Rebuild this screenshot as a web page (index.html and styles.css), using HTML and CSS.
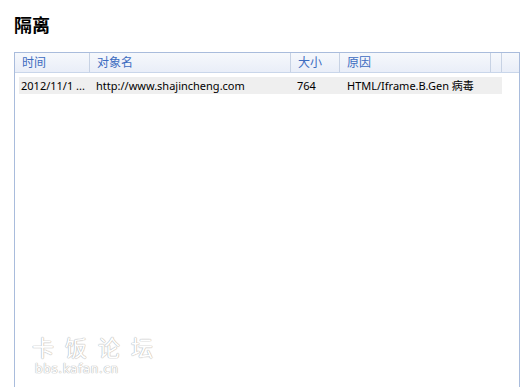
FILE: index.html
```html
<!DOCTYPE html>
<html lang="zh-CN">
<head>
  <meta charset="UTF-8" />
  <title>隔离</title>
  <link rel="stylesheet" href="styles.css">
</head>
<body>
  <h1 class="page-title">隔离</h1>

  <!-- quarantine list -->
  <div class="list-panel">
    <div class="list-head">
      <div class="col col-time">时间</div>
      <div class="col col-name">对象名</div>
      <div class="col col-size">大小</div>
      <div class="col col-reason">原因</div>
      <div class="col col-pad"></div>
      <div class="col col-end"></div>
    </div>
    <div class="list-body">
      <div class="list-row">
        <div class="cell col-time">2012/11/1 ...</div>
        <div class="cell col-name">http://www.shajincheng.com</div>
        <div class="cell col-size">764</div>
        <div class="cell col-reason">HTML/Iframe.B.Gen 病毒</div>
      </div>
    </div>

    <div class="watermark">
      <div class="wm-cn">卡饭论坛</div>
      <div class="wm-en">bbs.kafan.cn</div>
    </div>
  </div>
</body>
</html>
```

FILE: styles.css
```css
/* Global */
body {
  margin: 0;
  background: #fff;
  font-family: "Noto Sans", "Noto Sans CJK SC", sans-serif;
  color: #000;
  overflow: hidden;
}

.page-title {
  margin: 0;
  padding: 13px 0 0 14px;
  height: 26px;
  font-size: 18px;
  line-height: 22px;
  font-weight: bold;
  font-family: "Noto Sans CJK SC", sans-serif;
}

/* List panel */
.list-panel {
  position: relative;
  margin: 13px 0 0 14px;
  width: 504px;
  height: 334px;
  border: 1px solid #a9bcdc;
  border-bottom: none;
}

.list-head {
  display: flex;
  height: 19px;
  background: linear-gradient(#f6f8fc, #e9eef8);
  border-bottom: 1px solid #c9d6ea;
}
.list-head .col {
  box-sizing: border-box;
  height: 19px;
  padding-left: 7px;
  border-right: 1px solid #c7d2e4;
  font-size: 12px;
  line-height: 18px;
  color: #3d6cc0;
  font-family: "Noto Sans CJK SC", sans-serif;
}

.col-time { width: 75px; }
.col-name { width: 201px; }
.col-size { width: 49px; }
.col-reason { width: 151px; }
.list-head .col-pad { width: 11px; padding: 0; }
.list-head .col-end { flex: 1; border-right: none; }

.list-body {
  padding: 4px 0 0 4px;
}
.list-row {
  display: flex;
  width: 483px;
  height: 17px;
  background: #efefef;
}
.list-row .cell {
  box-sizing: border-box;
  padding-left: 2px;
  font-size: 11px;
  line-height: 17px;
  white-space: nowrap;
}
.list-row .col-time { width: 75px; }
.list-row .col-name { width: 201px; }
.list-row .col-size { width: 50px; }

/* Forum watermark over the empty list */
.watermark {
  position: absolute;
  left: 17px;
  top: 281px;
  color: #fff;
  text-shadow: 0 0 1px #bbb, 0 0 1px #bbb, 0 0 1px #bbb;
}
.wm-cn {
  font-family: "Noto Sans CJK SC", sans-serif;
  font-size: 22px;
  line-height: 24px;
  letter-spacing: 11px;
}
.wm-en {
  margin-top: 4px;
  padding-left: 3px;
  font-family: "DejaVu Sans", sans-serif;
  font-size: 12px;
  line-height: 14px;
  letter-spacing: 0.6px;
}
```
